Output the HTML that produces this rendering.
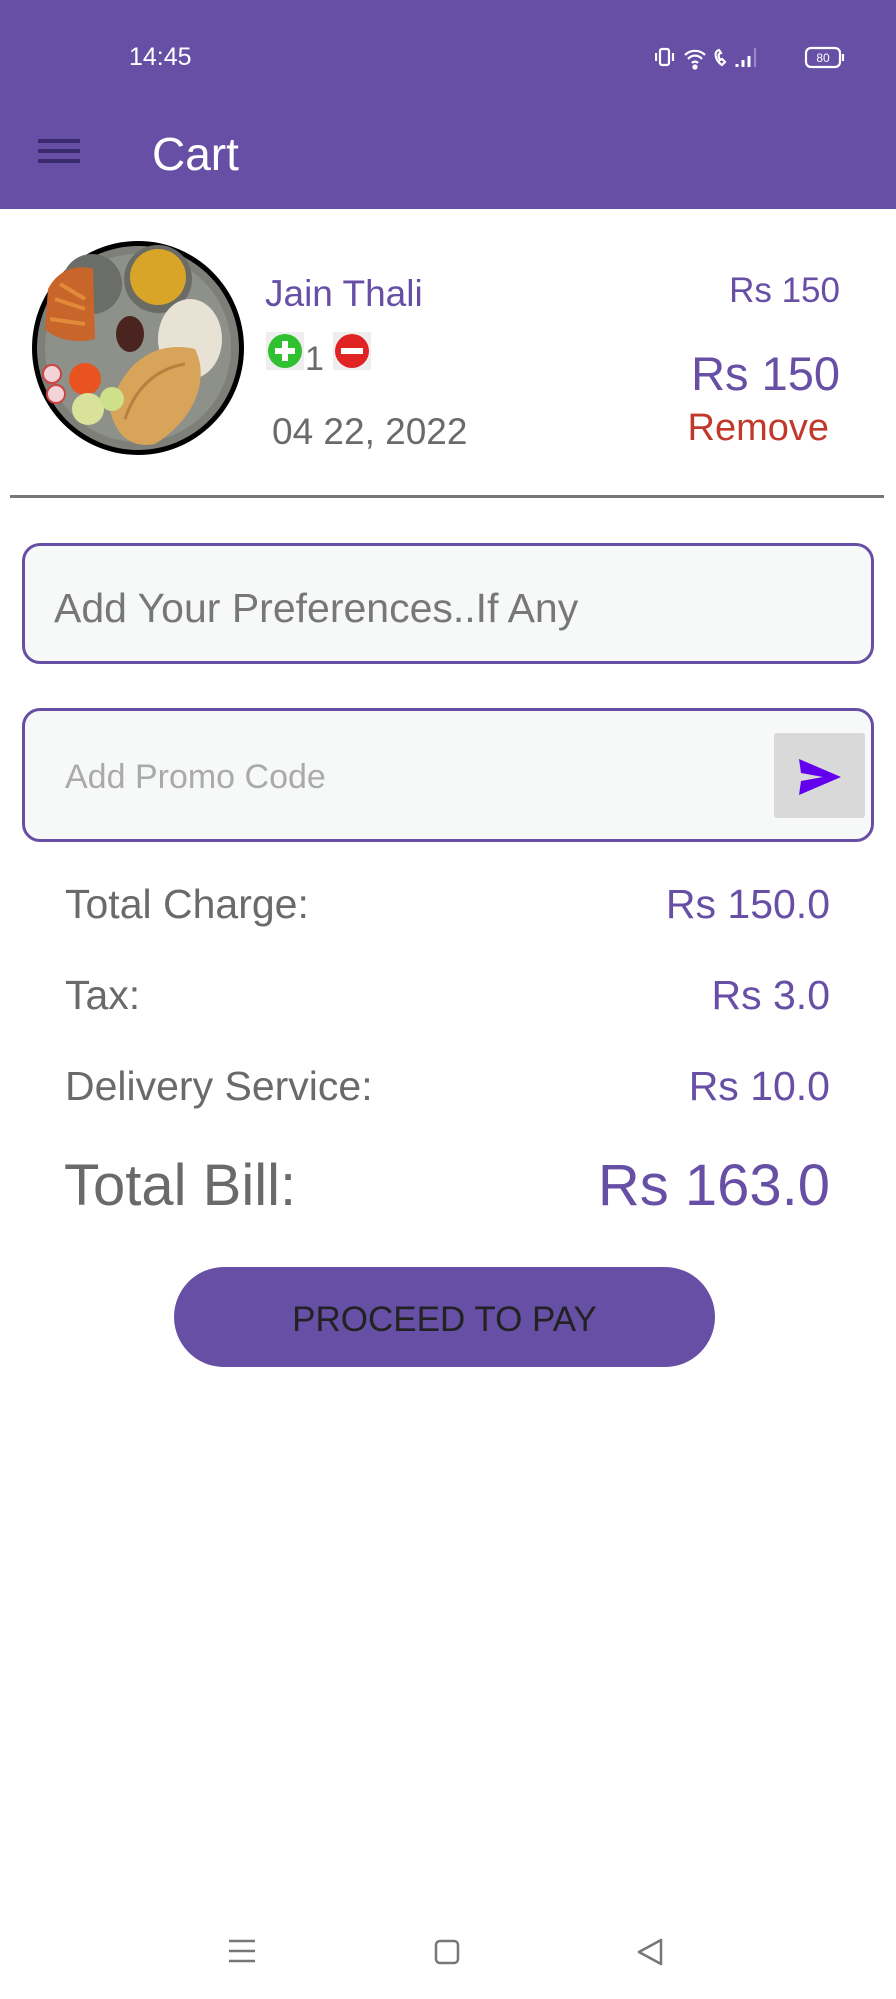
<!DOCTYPE html>
<html><head><meta charset="utf-8"><style>
*{margin:0;padding:0;box-sizing:border-box}
body{width:896px;height:1999px;background:#fff;font-family:"Liberation Sans",sans-serif;position:relative;overflow:hidden}
.a{position:absolute;white-space:nowrap;line-height:1}
.hdr{position:absolute;left:0;top:0;width:896px;height:209px;background:#674FA6}
.box{position:absolute;border:3px solid #674FA6;border-radius:18px;background:#F7F9F9}
.p{color:#674FA6}
.g{color:#6a6a6a}
</style></head><body>
<div class="hdr"></div>
<div class="a" style="left:129px;top:45px;font-size:25px;color:#fff">14:45</div>
<svg class="a" style="left:655px;top:43px" width="195" height="30" viewBox="0 0 195 30" fill="none" stroke="#fff" stroke-width="2.2">
<rect x="5" y="6" width="9" height="16" rx="2"/><path d="M1 10v8M18 10v8"/>
<path d="M30 12a14 14 0 0 1 20 0M33 16a9 9 0 0 1 14 0M37 20a4 4 0 0 1 6 0"/><circle cx="40" cy="24" r="1.5" fill="#fff"/>
<path d="M62 8c-3 3-1 10 5 14l3-3-3-3-2 1c-1-2-2-4-1-6l2-1-2-3z"/>
<path d="M82 24v-3M88 24v-7M94 24v-11" stroke-width="3"/><path d="M100 24V5" stroke="#9a88c9"/>
<rect x="151" y="5" width="34" height="19" rx="5"/><path d="M188 11v7"/>
<text x="168" y="19" font-size="12" fill="#fff" stroke="none" text-anchor="middle" font-family="Liberation Sans">80</text>
</svg>
<div class="a" style="left:38px;top:139px;width:42px;height:4px;background:#3a2a70;box-shadow:0 10px 0 #3a2a70,0 20px 0 #3a2a70"></div>
<div class="a" style="left:152px;top:131px;font-size:46px;color:#fff">Cart</div>

<svg class="a" style="left:30px;top:239px" width="216" height="218" viewBox="0 0 216 218">
<ellipse cx="108" cy="109" rx="106" ry="107" fill="#000"/>
<ellipse cx="108" cy="109" rx="101" ry="102" fill="#7d7f78"/>
<ellipse cx="108" cy="109" rx="93" ry="94" fill="#8e908a"/>
<circle cx="62" cy="45" r="30" fill="#6b6d68"/>
<circle cx="128" cy="40" r="34" fill="#6b6b66"/><circle cx="128" cy="38" r="28" fill="#d9a528"/>
<path d="M18 50c10-20 30-25 45-20l2 70c-20 5-40 0-50-10z" fill="#c8652a"/>
<path d="M25 60l30 10M20 80l35 5M30 45l25 15" stroke="#e08a3a" stroke-width="4"/>
<ellipse cx="160" cy="100" rx="32" ry="40" fill="#e8e2d4"/>
<ellipse cx="100" cy="95" rx="14" ry="18" fill="#4a2520"/>
<path d="M80 170c10-40 40-70 85-60c15 30 0 70-40 95c-25 5-40-10-45-35z" fill="#d7a45a"/>
<path d="M95 180c10-30 30-50 60-55" stroke="#b78040" stroke-width="3" fill="none"/>
<circle cx="55" cy="140" r="16" fill="#e8531f"/>
<circle cx="58" cy="170" r="16" fill="#d8e29a"/><circle cx="82" cy="160" r="12" fill="#cfe08a"/>
<circle cx="22" cy="135" r="9" fill="#f2d4d8" stroke="#c44" stroke-width="2"/><circle cx="26" cy="155" r="9" fill="#f2d4d8" stroke="#c44" stroke-width="2"/>
</svg>

<div class="a p" style="left:265px;top:275px;font-size:37px">Jain Thali</div>
<svg class="a" style="left:266px;top:332px" width="38" height="38" viewBox="0 0 38 38"><rect width="38" height="38" fill="#eee"/><circle cx="19" cy="19" r="17" fill="#2fc12f"/><path d="M19 9v20M9 19h20" stroke="#fff" stroke-width="6"/></svg>
<div class="a g" style="left:305px;top:342px;font-size:34px">1</div>
<svg class="a" style="left:333px;top:332px" width="38" height="38" viewBox="0 0 38 38"><rect width="38" height="38" fill="#eee"/><circle cx="19" cy="19" r="17" fill="#e02424"/><path d="M8 19h22" stroke="#fff" stroke-width="6"/></svg>
<div class="a g" style="left:272px;top:413px;font-size:37px">04 22, 2022</div>
<div class="a p" style="right:56px;top:273px;font-size:35px">Rs 150</div>
<div class="a p" style="right:56px;top:350px;font-size:47px">Rs 150</div>
<div class="a" style="right:67px;top:409px;font-size:38px;color:#c0392b">Remove</div>
<div class="a" style="left:10px;top:495px;width:874px;height:3px;background:#777"></div>

<div class="box" style="left:22px;top:543px;width:852px;height:121px"></div>
<div class="a" style="left:54px;top:588px;font-size:41px;color:#777">Add Your Preferences..If Any</div>
<div class="box" style="left:22px;top:708px;width:852px;height:134px"></div>
<div class="a" style="left:65px;top:760px;font-size:34px;color:#aaa">Add Promo Code</div>
<div class="a" style="left:774px;top:733px;width:91px;height:85px;background:#d9d9d9;border-radius:3px"></div>
<svg class="a" style="left:797px;top:757px" width="46" height="40" viewBox="0 0 46 40"><path d="M2 2L44 20L2 38L4 24L26 20L4 16Z" fill="#6200ee"/></svg>

<div class="a g" style="left:65px;top:884px;font-size:41px">Total Charge:</div>
<div class="a p" style="right:66px;top:884px;font-size:41px">Rs 150.0</div>
<div class="a g" style="left:65px;top:975px;font-size:41px">Tax:</div>
<div class="a p" style="right:66px;top:975px;font-size:41px">Rs 3.0</div>
<div class="a g" style="left:65px;top:1066px;font-size:41px">Delivery Service:</div>
<div class="a p" style="right:66px;top:1066px;font-size:41px">Rs 10.0</div>
<div class="a g" style="left:64px;top:1157px;font-size:58px">Total Bill:</div>
<div class="a p" style="right:66px;top:1157px;font-size:58px">Rs 163.0</div>

<div class="a" style="left:174px;top:1267px;width:541px;height:100px;border-radius:50px;background:#674FA6"></div>
<div class="a" style="left:174px;top:1302px;width:541px;text-align:center;font-size:35px;color:#222">PROCEED TO PAY</div>

<svg class="a" style="left:225px;top:1935px" width="440" height="34" viewBox="0 0 440 34" fill="none" stroke="#777" stroke-width="2.5">
<path d="M4 6h26M4 16h26M4 26h26"/>
<rect x="211" y="6" width="22" height="22" rx="4"/>
<path d="M436 5L414 17L436 29Z" stroke-linejoin="round"/>
</svg>
</body></html>
